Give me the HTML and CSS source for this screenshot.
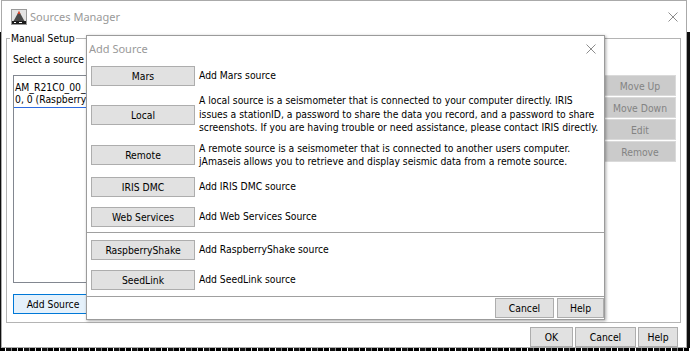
FILE: index.html
```html
<!DOCTYPE html>
<html>
<head>
<title>Sources Manager</title>
<link rel="stylesheet" href="styles.css">
</head>
<body>

<div class="window">
  <div class="titlebar">
    <svg class="app-icon" width="16" height="16" viewBox="0 0 16 16">
      <rect x="0.5" y="0.5" width="15" height="15" fill="#e4e4e4" stroke="#9a9a9a"/>
      <polygon points="2,13 7,4 9,4 14,13" fill="#4a4a4a"/>
      <polygon points="6.5,5 8,1.5 9.5,5" fill="#d23a1e"/>
      <rect x="1" y="12" width="14" height="3" fill="#1c1c1c"/>
      <rect x="3" y="13" width="2" height="1" fill="#fff"/>
      <rect x="8" y="13" width="3" height="1" fill="#fff"/>
    </svg>
    <span class="win-title">Sources Manager</span>
    <svg class="close-x" width="10" height="10" viewBox="0 0 10 10">
      <path d="M0.5 0.5 L9.5 9.5 M9.5 0.5 L0.5 9.5" stroke="#8c8c8c" stroke-width="1"/>
    </svg>
  </div>

  <div class="main">
    <fieldset class="group">
      <legend>Manual Setup</legend>
      <div class="select-label">Select a source</div>
      <div class="group-main">
        <div class="source-list">
          <div class="list-item">AM_R21C0_00_EHZ, 0.0, 0.0,<br>0, 0 (RaspberryShake)</div>
        </div>
        <div class="side-buttons">
          <button class="btn disabled">Move Up</button>
          <button class="btn disabled">Move Down</button>
          <button class="btn disabled">Edit</button>
          <button class="btn disabled">Remove</button>
        </div>
      </div>
      <div class="add-row">
        <button class="btn focused">Add Source</button>
      </div>
    </fieldset>

    <div class="footer">
      <button class="btn ok-btn">OK</button>
      <button class="btn cancel-btn">Cancel</button>
      <button class="btn help-btn">Help</button>
    </div>
  </div>
</div>

<!-- Add Source dialog, sits on top of the manager window -->
<div class="dialog">
  <div class="dlg-title">
    <span class="win-title">Add Source</span>
    <svg class="dlg-close" width="10" height="10" viewBox="0 0 10 10">
      <path d="M0.5 0.5 L9.5 9.5 M9.5 0.5 L0.5 9.5" stroke="#8c8c8c" stroke-width="1"/>
    </svg>
  </div>

  <div class="dlg-rows upper">
    <div class="row"><button class="btn src-btn">Mars</button><div class="desc">Add Mars source</div></div>
    <div class="row"><button class="btn src-btn">Local</button><div class="desc">A local source is a seismometer that is connected to your computer directly. IRIS<br>issues a stationID, a password to share the data you record, and a password to share<br>screenshots. If you are having trouble or need assistance, please contact IRIS directly.</div></div>
    <div class="row"><button class="btn src-btn">Remote</button><div class="desc">A remote source is a seismometer that is connected to another users computer.<br>jAmaseis allows you to retrieve and display seismic data from a remote source.</div></div>
    <div class="row"><button class="btn src-btn">IRIS DMC</button><div class="desc">Add IRIS DMC source</div></div>
    <div class="row"><button class="btn src-btn">Web Services</button><div class="desc">Add Web Services Source</div></div>
  </div>

  <div class="dlg-rows lower">
    <div class="row"><button class="btn src-btn">RaspberryShake</button><div class="desc">Add RaspberryShake source</div></div>
    <div class="row"><button class="btn src-btn">SeedLink</button><div class="desc">Add SeedLink source</div></div>
  </div>

  <div class="dlg-buttons">
    <button class="btn dlg-cancel">Cancel</button>
    <button class="btn dlg-help">Help</button>
  </div>
</div>

<div class="desktop-strip"></div>

</body>
</html>
```

FILE: styles.css
```css
body {
  margin: 0;
  width: 690px;
  height: 351px;
  overflow: hidden;
  position: relative;
  background: linear-gradient(#fff 0 32px, #0e0e0e 32px);
  font-family: "DejaVu Sans Condensed", "Liberation Sans", sans-serif;
  font-stretch: condensed;
  font-size: 10.3px;
  color: #000;
}

.window {
  margin-left: 1px;
  width: 686px;
  height: 348px;
  box-sizing: border-box;
  border: 1px solid #aaa;
  background: #fff;
  display: flex;
  flex-direction: column;
}

.titlebar {
  height: 31px;
  display: flex;
  align-items: center;
  padding-left: 9px;
}
.app-icon {
  margin-right: 3px;
}
.win-title {
  font-family: "Noto Sans", sans-serif;
  font-stretch: normal;
  font-size: 11px;
  color: #999;
}
.close-x {
  margin-left: auto;
  margin-right: 8px;
}

.main {
  flex: 1;
  display: flex;
  flex-direction: column;
}

/* titled border round the manual setup panel */
.group {
  margin: 0 5px 0 4px;
  padding: 0 4px 8px 6px;
  border: 1px solid #b4b4b4;
  min-width: 0;
  display: flex;
  flex-direction: column;
}
.group legend {
  margin-left: -3px;
  padding: 0 1px;
  line-height: 13px;
}
.select-label {
  margin-top: 8px;
  line-height: 13px;
}
.group-main {
  margin-top: 9px;
  height: 208px;
  display: flex;
  gap: 3px;
}
.source-list {
  flex: 1;
  border: 1px solid #828790;
  background: #fff;
}
.list-item {
  padding: 5px 1px 2px;
  line-height: 12px;
  white-space: nowrap;
  border-bottom: 1px solid #2e6be0;
}
.side-buttons {
  width: 72px;
  display: flex;
  flex-direction: column;
  gap: 1px;
}
.add-row {
  margin-top: 11px;
  display: flex;
}

.btn {
  height: 20px;
  padding: 0;
  box-sizing: border-box;
  background: #e1e1e1;
  border: 1px solid #adadad;
  font: inherit;
  color: #000;
  text-align: center;
  white-space: nowrap;
}
.btn.disabled {
  height: 21px;
  background: #cbcbcb;
  border-color: #dadada;
  color: #838383;
}
.btn.focused {
  width: 80px;
  height: 20px;
  background: #e5f1fb;
  border-color: #0078d7;
}

.footer {
  margin-top: 4px;
  padding-right: 8px;
  display: flex;
  justify-content: flex-end;
  gap: 2px;
}
.ok-btn { width: 43px; }
.cancel-btn { width: 61px; }
.help-btn { width: 40px; }

/* dialog window */
.dialog {
  position: absolute;
  left: 86px;
  top: 35px;
  width: 519px;
  height: 285px;
  box-sizing: border-box;
  border: 1px solid #9b9b9b;
  background: #fff;
  box-shadow: 1px 1px 3px rgba(0, 0, 0, 0.35);
  display: flex;
  flex-direction: column;
}
.dlg-title {
  height: 25px;
  padding-left: 2px;
  display: flex;
  align-items: center;
}
.dlg-close {
  margin-left: auto;
  margin-right: 8px;
}
.dlg-rows {
  display: grid;
  border-bottom: 1px solid #a0a0a0;
}
.dlg-rows.upper {
  grid-template-rows: 30px 47px 34px 30px 30px;
}
.dlg-rows.lower {
  grid-template-rows: 30px 30px;
  padding: 2px 0 1px;
}
.row {
  display: flex;
  align-items: center;
  gap: 4px;
  padding-left: 4px;
}
.src-btn {
  width: 104px;
  flex: none;
}
.desc {
  line-height: 13.5px;
  white-space: nowrap;
}
.dlg-buttons {
  flex: 1;
  display: flex;
  justify-content: flex-end;
  align-items: flex-start;
  gap: 3px;
  padding-top: 1px;
}
.dlg-cancel { width: 59px; }
.dlg-help { width: 47px; }

.desktop-strip {
  height: 3px;
  background: repeating-linear-gradient(90deg, #000 0 5px, #fff 5px 6px, #111 6px 11px, #888 11px 12px, #000 12px 17px, #ddd 17px 18px);
}
```
